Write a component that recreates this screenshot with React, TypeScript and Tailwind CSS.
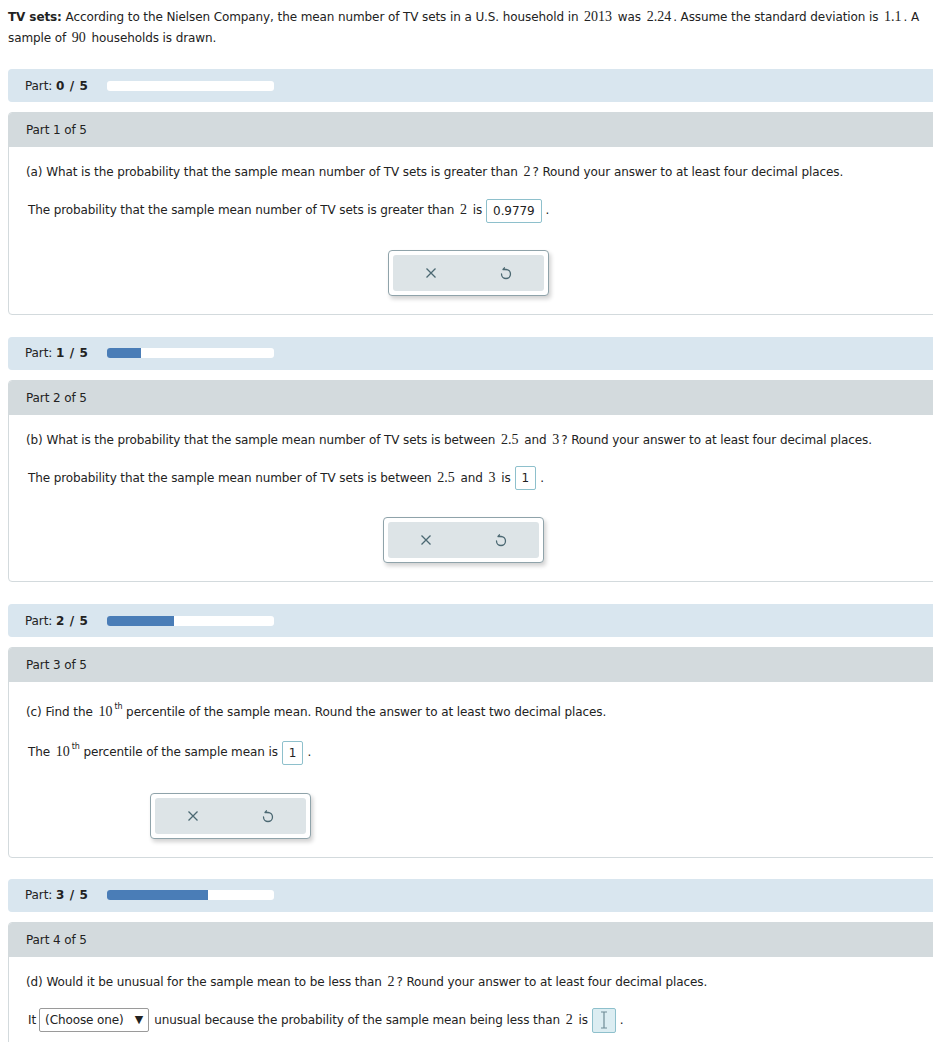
import React from 'react';

const M: React.FC<{ children: React.ReactNode }> = ({ children }) => (
  <span className="px-[2px] font-[family-name:'Liberation_Serif',serif] text-[14px] leading-none tracking-normal">
    {children}
  </span>
);

const Th = () => <sup className="relative -top-[7px] text-[8px]">th</sup>;

const PartBar: React.FC<{ n: number }> = ({ n }) => (
  <div className="flex h-[33px] items-center rounded-[4px] bg-[#d9e6ef] pl-[17px]">
    <span>
      Part: <b className="tracking-[0.6px]">{n} / 5</b>
    </span>
    <div className="ml-[19px] h-[10px] w-[167px] overflow-hidden rounded-[3px] bg-white">
      <div className="h-full bg-[#4a7db7]" style={{ width: `${n * 20}%` }} />
    </div>
  </div>
);

const Answer: React.FC<{ value?: string }> = ({ value }) => (
  <span className="mx-[4px] inline-flex h-[24px] items-center rounded-[2px] border border-[#8ec0cc] px-[6px] align-middle">
    {value}
  </span>
);

const Buttons: React.FC<{ className?: string }> = ({ className = 'mt-[27px]' }) => (
  <div
    className={`${className} h-[46px] w-[161px] rounded-[4px] border border-[#8fa3aa] bg-white p-[4px] shadow-[2px_3px_4px_rgba(0,0,0,0.18)]`}
  >
    <div className="flex h-full items-center justify-around rounded-[3px] bg-[#dde4e7] text-[#4b6872]">
      <svg width="12" height="12" viewBox="0 0 12 12" fill="none" stroke="currentColor" strokeWidth="1.3">
        <path d="M1.5 1.5 L10.5 10.5 M10.5 1.5 L1.5 10.5" />
      </svg>
      <svg width="12" height="14" viewBox="0 0 12 14" fill="none" stroke="currentColor" strokeWidth="1.3" strokeLinecap="round">
        <path d="M6 3.5 A4.5 4.5 0 1 1 1.5 8" />
        <path d="M6 3.5 H3.2 M4.4 1.8 L3 3.5" />
      </svg>
    </div>
  </div>
);

const Card: React.FC<{ title: string; question: React.ReactNode; answer: React.ReactNode; tall?: boolean }> = ({
  title,
  question,
  answer,
  tall,
}) => (
  <div className="mt-[10px] overflow-hidden rounded-[4px] border border-[#d3dadd]">
    <div className="flex h-[34px] items-center bg-[#d3dadd] pl-[17px]">{title}</div>
    <div className={tall ? 'pb-[18px] pl-[17px] pt-[20px]' : 'pb-[18px] pl-[17px] pt-[15px]'}>
      <div className="leading-[20px]">{question}</div>
      <div className={tall ? 'mt-[18px] inline-flex flex-col items-end pl-[2px]' : 'mt-[16px] inline-flex flex-col items-end pl-[2px]'}>
        <div className="leading-[24px]">{answer}</div>
        <Buttons className={tall ? 'mt-[28px]' : 'mt-[27px]'} />
      </div>
    </div>
  </div>
);

export default function App() {
  return (
    <div className="h-[1042px] w-full overflow-hidden bg-white">
      <div className="w-[950px] pl-[8px] pt-[7px] font-[family-name:'DejaVu_Sans',Verdana,sans-serif] text-[12px] tracking-[-0.1px] text-[#222]">
        <p className="w-[920px] leading-[21px]">
          <b>TV sets:</b> According to the Nielsen Company, the mean number of TV sets in a U.S. household in <M>2013</M>{' '}
          was <M>2.24</M>. Assume the standard deviation is <M>1.1</M>. A sample of <M>90</M> households is drawn.
        </p>

        <div className="mt-[20px]">
          <PartBar n={0} />
          <Card
            title="Part 1 of 5"
            question={
              <>
                (a) What is the probability that the sample mean number of TV sets is greater than <M>2</M>? Round your answer to
                at least four decimal places.
              </>
            }
            answer={
              <>
                The probability that the sample mean number of TV sets is greater than <M>2</M> is
                <Answer value="0.9779" />.
              </>
            }
          />
        </div>

        <div className="mt-[22px]">
          <PartBar n={1} />
          <Card
            title="Part 2 of 5"
            question={
              <>
                (b) What is the probability that the sample mean number of TV sets is between <M>2.5</M> and <M>3</M>? Round your
                answer to at least four decimal places.
              </>
            }
            answer={
              <>
                The probability that the sample mean number of TV sets is between <M>2.5</M> and <M>3</M> is
                <Answer value="1" />.
              </>
            }
          />
        </div>

        <div className="mt-[22px]">
          <PartBar n={2} />
          <Card
            tall
            title="Part 3 of 5"
            question={
              <>
                (c) Find the <M>10</M>
                <Th /> percentile of the sample mean. Round the answer to at least two decimal places.
              </>
            }
            answer={
              <>
                The <M>10</M>
                <Th /> percentile of the sample mean is
                <Answer value="1" />.
              </>
            }
          />
        </div>

        <div className="mt-[21px]">
          <PartBar n={3} />
          <div className="mt-[10px] overflow-hidden rounded-[4px] border border-[#d3dadd]">
            <div className="flex h-[34px] items-center bg-[#d3dadd] pl-[17px]">Part 4 of 5</div>
            <div className="pb-[18px] pl-[17px] pt-[15px]">
              <div className="leading-[20px]">
                (d) Would it be unusual for the sample mean to be less than <M>2</M>? Round your answer to at least four decimal
                places.
              </div>
              <div className="mt-[16px] flex items-center pl-[2px] leading-[24px]">
                It
                <span className="ml-[3px] mr-[5px] inline-flex h-[24px] items-center rounded-[2px] border border-[#9a9a9a] px-[5px]">
                  (Choose one)&nbsp;&nbsp;&nbsp;<span className="text-[11px]">▼</span>
                </span>
                unusual because the probability of the sample mean being less than&nbsp;<M>2</M>&nbsp;is
                <span className="mx-[4px] inline-flex h-[25px] w-[24px] items-center justify-center rounded-[2px] border border-[#8ec0cc] bg-[#dcedf2]">
                  <svg width="8" height="18" viewBox="0 0 8 18" fill="none" stroke="#6f8c96" strokeWidth="1.2">
                    <path d="M1 1 H7 M4 1 V17 M1 17 H7" />
                  </svg>
                </span>
                .
              </div>
              <Buttons />
            </div>
          </div>
        </div>
      </div>
    </div>
  );
}
